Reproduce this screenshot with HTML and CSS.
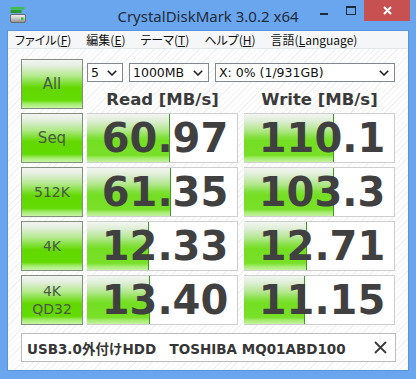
FILE: index.html
```html
<!DOCTYPE html>
<html lang="ja">
<head>
<meta charset="utf-8">
<title>CrystalDiskMark</title>
<link rel="stylesheet" href="styles.css">
</head>
<body>
<div class="window">
  <div class="titlebar">
    <div class="tb-left">
      <svg class="appicon" width="16" height="16" viewBox="0 0 16 16">
        <defs>
          <linearGradient id="drv" x1="0" y1="0" x2="0" y2="1">
            <stop offset="0" stop-color="#f2f2f2"/>
            <stop offset="0.5" stop-color="#c8c8c8"/>
            <stop offset="1" stop-color="#8c8c8c"/>
          </linearGradient>
        </defs>
        <rect x="0.5" y="0" width="14" height="2.5" rx="0.5" fill="#3fbf3f"/>
        <rect x="0.5" y="3" width="11" height="3" rx="0.5" fill="#2a9a2a"/>
        <rect x="0.5" y="7.5" width="15" height="8" rx="1.5" fill="url(#drv)" stroke="#6b6b6b" stroke-width="1"/>
        <rect x="11" y="10.5" width="2.5" height="2.5" fill="#33c433"/>
      </svg>
    </div>
    <div class="title">CrystalDiskMark 3.0.2 x64</div>
    <div class="tb-right">
      <span class="ctl"><span class="min"></span></span>
      <span class="ctl"><span class="max"></span></span>
      <span class="ctl close">
        <svg width="9" height="9" viewBox="0 0 9 9"><path d="M1 1 L8 8 M8 1 L1 8" stroke="#fff" stroke-width="2"/></svg>
      </span>
    </div>
  </div>
  <div class="frame">
    <div class="menubar">
      <span class="mi">ファイル(<u>F</u>)</span>
      <span class="mi">編集(<u>E</u>)</span>
      <span class="mi">テーマ(<u>T</u>)</span>
      <span class="mi">ヘルプ(<u>H</u>)</span>
      <span class="mi">言語(<u>L</u>anguage)</span>
    </div>
    <div class="client">
      <div class="rows">
        <div class="row">
          <div class="btn"><span class="lbl comic">All</span></div>
          <div class="top">
            <div class="selects">
              <div class="sel s1"><span>5</span><svg width="10" height="6" viewBox="0 0 10 6"><path d="M0.8 0.8 L5 5 L9.2 0.8" fill="none" stroke="#222" stroke-width="1.6"/></svg></div>
              <div class="sel s2"><span>1000MB</span><svg width="10" height="6" viewBox="0 0 10 6"><path d="M0.8 0.8 L5 5 L9.2 0.8" fill="none" stroke="#222" stroke-width="1.6"/></svg></div>
              <div class="sel s3"><span>X: 0% (1/931GB)</span><svg width="10" height="6" viewBox="0 0 10 6"><path d="M0.8 0.8 L5 5 L9.2 0.8" fill="none" stroke="#222" stroke-width="1.6"/></svg></div>
            </div>
            <div class="heads">
              <div class="head">Read [MB/s]</div>
              <div class="head">Write [MB/s]</div>
            </div>
          </div>
        </div>
        <div class="row">
          <div class="btn"><span class="lbl comic">Seq</span></div>
          <div class="cells">
            <div class="cell"><div class="bar" style="width:83px"></div><div class="num">60.97</div></div>
            <div class="cell"><div class="bar" style="width:90px"></div><div class="num">110.1</div></div>
          </div>
        </div>
        <div class="row">
          <div class="btn"><span class="lbl">512K</span></div>
          <div class="cells">
            <div class="cell"><div class="bar" style="width:84px"></div><div class="num">61.35</div></div>
            <div class="cell"><div class="bar" style="width:90px"></div><div class="num">103.3</div></div>
          </div>
        </div>
        <div class="row">
          <div class="btn"><span class="lbl">4K</span></div>
          <div class="cells">
            <div class="cell"><div class="bar" style="width:62px"></div><div class="num">12.33</div></div>
            <div class="cell"><div class="bar" style="width:63px"></div><div class="num">12.71</div></div>
          </div>
        </div>
        <div class="row">
          <div class="btn"><span class="lbl two">4K<br>QD32</span></div>
          <div class="cells">
            <div class="cell"><div class="bar" style="width:63px"></div><div class="num">13.40</div></div>
            <div class="cell"><div class="bar" style="width:61px"></div><div class="num">11.15</div></div>
          </div>
        </div>
      </div>
      <div class="comment">
        <span class="ctext">USB3.0外付けHDD　TOSHIBA MQ01ABD100</span>
        <svg class="cclose" width="13" height="13" viewBox="0 0 13 13"><path d="M1 1 L12 12 M12 1 L1 12" stroke="#3a3a3a" stroke-width="1.8"/></svg>
      </div>
    </div>
  </div>
</div>
</body>
</html>
```

FILE: styles.css
```css
* { box-sizing: border-box; }
html, body { margin: 0; padding: 0; }
body { width: 416px; height: 379px; overflow: hidden; background: #6aa6ee; }

.window {
  width: 416px;
  height: 379px;
  background: #6aa6ee;
  display: flex;
  flex-direction: column;
  padding: 0 7px 8px 7px;
}

.titlebar {
  height: 30px;
  margin: 0 -7px;
  display: grid;
  grid-template-columns: 1fr auto 1fr;
  align-items: start;
}
.tb-left { display: flex; padding: 7px 0 0 10px; }
.appicon { display: block; }
.title {
  font-family: "Noto Sans", "Open Sans", sans-serif;
  font-size: 15px;
  line-height: 20px;
  padding-top: 6px;
  color: #1f2a38;
  white-space: nowrap;
}
.tb-right { display: flex; justify-content: flex-end; padding-right: 6px; }
.ctl {
  width: 27px;
  height: 21px;
  display: flex;
  align-items: center;
  justify-content: center;
}
.min { display: block; width: 8px; height: 2px; background: #1e2a3a; margin-top: 6px; }
.max { display: block; width: 10px; height: 9px; border: 1px solid #1e2a3a; border-top-width: 2px; margin-top: -1px; }
.ctl.close { width: 46px; background: #c75050; }

.frame {
  flex: 1;
  display: flex;
  flex-direction: column;
  border: 1px solid #5b93dc;
  background: #fff;
}

.menubar {
  height: 18px;
  background: #f5f6f7;
  border-bottom: 1px solid #e3e6ea;
  display: flex;
  align-items: center;
  gap: 1px;
  font-family: "Noto Sans CJK JP", "Noto Sans", sans-serif;
  font-feature-settings: "palt";
  font-size: 12px;
  color: #111;
  white-space: nowrap;
}
.mi { padding: 0 7px; line-height: 17px; }
.mi u { text-underline-offset: 1px; }

.client {
  flex: 1;
  padding: 10px 12px 0 13px;
  display: flex;
  flex-direction: column;
  gap: 8px;
  background-color: #fff;
  background-image: repeating-linear-gradient(135deg, #ffffff 0 3px, #f2f2f2 3px 4px);
}

.rows { display: flex; flex-direction: column; gap: 4px; }
.row { display: flex; gap: 4px; height: 50px; }

.btn {
  width: 62px;
  height: 50px;
  flex: none;
  border: 1px solid #80907c;
  background: linear-gradient(to bottom,
    #f5f5f3 0%, #e4eede 12%, #b6ea92 32%, #7fe036 48%, #62d800 58%,
    #64da04 84%, #9fec68 91%, #c9f5a8 100%);
  display: flex;
  align-items: center;
  justify-content: center;
}
.lbl {
  font-family: "DejaVu Sans", sans-serif;
  font-size: 14px;
  color: #4a5846;
  text-align: center;
  line-height: 18px;
}
.lbl.comic { font-size: 15px; }

.top { width: 308px; display: flex; flex-direction: column; }
.selects { display: flex; gap: 6px; margin-top: 4px; height: 19px; }
.sel {
  height: 19px;
  border: 1px solid #828790;
  background: #fff;
  display: flex;
  align-items: center;
  justify-content: space-between;
  padding: 0 5px 0 3px;
  font-family: "DejaVu Sans", sans-serif;
  font-size: 12.5px;
  color: #111;
  white-space: nowrap;
}
.sel svg { flex: none; }
.s1 { width: 36px; }
.s2 { width: 80px; }
.s3 { width: 180px; }

.heads { display: flex; gap: 6px; margin-top: 8px; }
.head {
  width: 151px;
  text-align: center;
  font-family: "DejaVu Sans", sans-serif;
  font-weight: bold;
  font-size: 16.5px;
  line-height: 19px;
  color: #3a3a3a;
  white-space: nowrap;
}

.cells { display: flex; gap: 6px; }
.cell {
  width: 151px;
  height: 50px;
  border: 1px solid #cfcfcf;
  background: #fff;
  display: grid;
  grid-template: 1fr / 1fr;
}
.bar, .num { grid-area: 1 / 1; }
.bar {
  justify-self: start;
  height: 100%;
  margin-left: -1px;
  border-right: 1px solid #3f9a22;
  background: linear-gradient(to bottom,
    #f3f5f1 0%, #dfeed6 14%, #b2e78c 34%, #84e040 48%, #74de22 56%,
    #78e028 86%, #a4ec6c 92%, #c4f2a0 100%);
}
.num {
  align-self: center;
  text-align: center;
  padding-left: 5px;
  font-family: "DejaVu Sans", sans-serif;
  font-weight: bold;
  font-size: 40px;
  line-height: 48px;
  color: #404040;
}

.comment {
  width: 375px;
  height: 29px;
  border: 1px solid #bcbcbc;
  background: #fff;
  display: flex;
  align-items: center;
  justify-content: space-between;
  padding: 0 8px 0 5px;
}
.ctext {
  font-family: "DejaVu Sans", "Noto Sans CJK JP", sans-serif;
  font-weight: bold;
  font-size: 13.5px;
  color: #363636;
  white-space: nowrap;
}
.cclose { display: block; flex: none; }
```
